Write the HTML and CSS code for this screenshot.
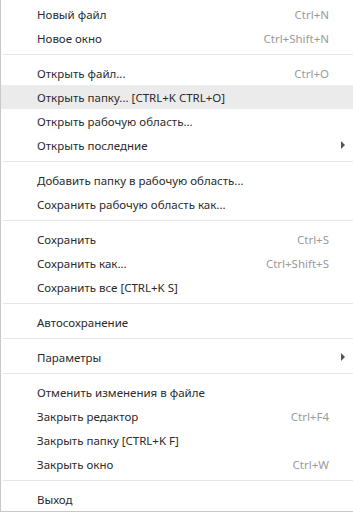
FILE: index.html
```html
<!DOCTYPE html>
<html lang="ru">
<head>
    <meta charset="UTF-8">
    <meta name="viewport" content="width=device-width, initial-scale=1.0">
    <title>Файл</title>
    <link rel="stylesheet" href="styles.css">
</head>
<body>
    <div class="menu">
        <div class="item"><span class="label">Новый файл</span><span class="key">Ctrl+N</span></div>
        <div class="item"><span class="label">Новое окно</span><span class="key">Ctrl+Shift+N</span></div>
        <div class="sep"></div>
        <div class="item"><span class="label">Открыть файл...</span><span class="key">Ctrl+O</span></div>
        <div class="item active"><span class="label">Открыть папку... [CTRL+K CTRL+O]</span></div>
        <div class="item"><span class="label">Открыть рабочую область...</span></div>
        <div class="item sub"><span class="label">Открыть последние</span><span class="arrow"></span></div>
        <div class="sep"></div>
        <div class="item"><span class="label">Добавить папку в рабочую область...</span></div>
        <div class="item"><span class="label">Сохранить рабочую область как...</span></div>
        <div class="sep"></div>
        <div class="item"><span class="label">Сохранить</span><span class="key">Ctrl+S</span></div>
        <div class="item"><span class="label">Сохранить как...</span><span class="key">Ctrl+Shift+S</span></div>
        <div class="item"><span class="label">Сохранить все [CTRL+K S]</span></div>
        <div class="sep"></div>
        <div class="item"><span class="label">Автосохранение</span></div>
        <div class="sep"></div>
        <div class="item sub"><span class="label">Параметры</span><span class="arrow"></span></div>
        <div class="sep"></div>
        <div class="item"><span class="label">Отменить изменения в файле</span></div>
        <div class="item"><span class="label">Закрыть редактор</span><span class="key">Ctrl+F4</span></div>
        <div class="item"><span class="label">Закрыть папку [CTRL+K F]</span></div>
        <div class="item"><span class="label">Закрыть окно</span><span class="key">Ctrl+W</span></div>
        <div class="sep"></div>
        <div class="item"><span class="label">Выход</span></div>
    </div>
</body>
</html>
```

FILE: styles.css
```css
body {
    margin: 0;
    background: #fff;
    font-family: 'Noto Sans', 'Open Sans', sans-serif;
    font-size: 11.5px;
    color: #2b2b2b;
}

.menu {
    width: 352px;
    padding-top: 2px;
    border-left: 1px solid #c8c8c8;
    border-bottom: 1px solid #c8c8c8;
}

.item {
    display: flex;
    align-items: center;
    height: 24px;
    padding: 0 24px 0 36px;
    position: relative;
}

.item.active {
    background-color: #ebebeb;
}

.label {
    flex: 1;
    white-space: nowrap;
}

.key {
    color: #9a9a9a;
}

.arrow {
    position: absolute;
    right: 8px;
    top: 8px;
    width: 0;
    height: 0;
    border-top: 4px solid transparent;
    border-bottom: 4px solid transparent;
    border-left: 4px solid #555;
}

.sep {
    height: 1px;
    margin: 4px 0 6px 2px;
    background-color: #e6e6e6;
}
```
